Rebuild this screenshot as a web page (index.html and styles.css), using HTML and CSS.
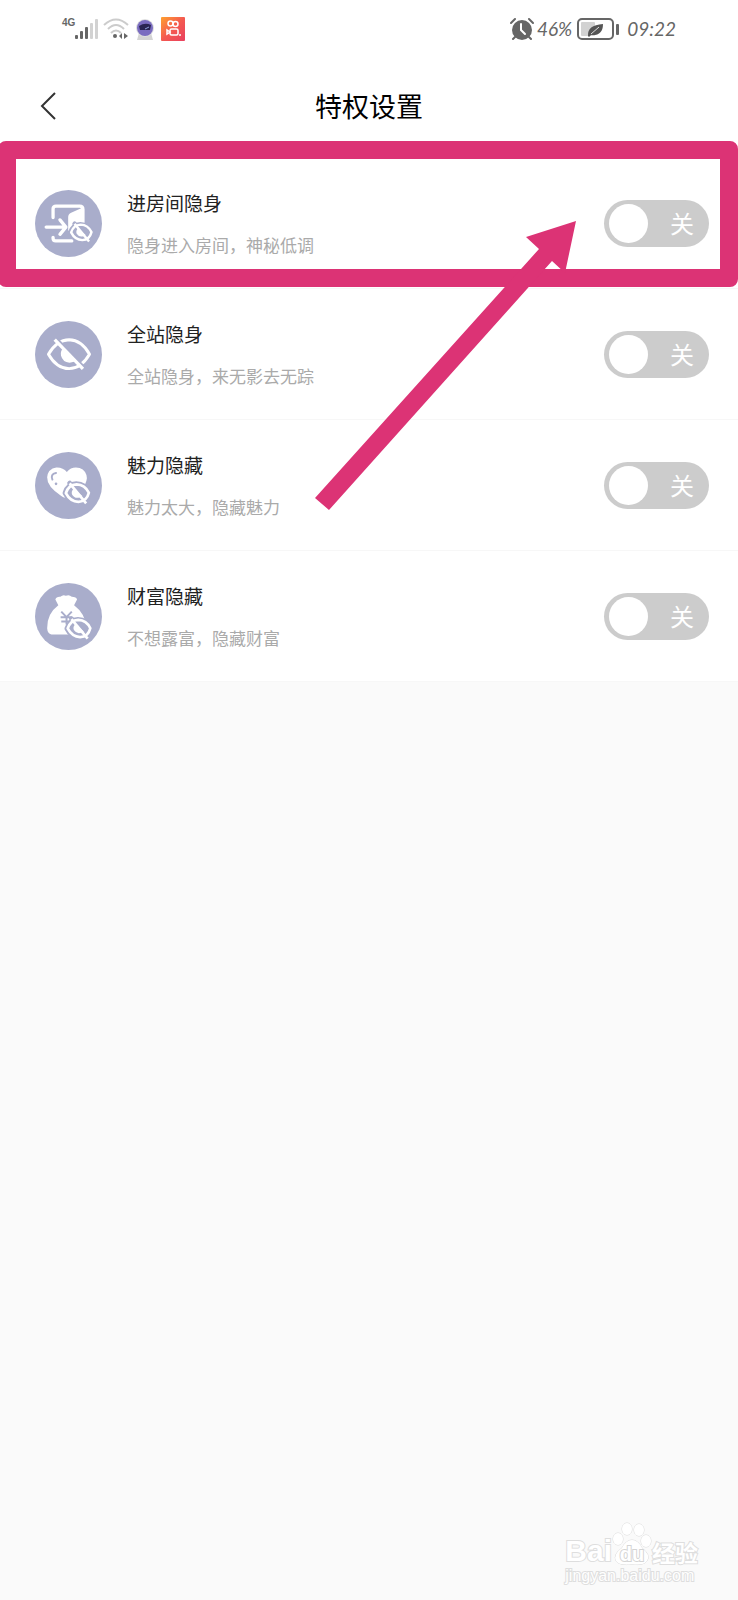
FILE: index.html
```
<!DOCTYPE html>
<html lang="zh-CN">
<head>
  <meta charset="UTF-8" />
  <meta name="viewport" content="width=device-width, initial-scale=1.0" />
  <title>特权设置</title>
  <link rel="stylesheet" href="styles.css">
</head>
<body>
  <svg class="defs" aria-hidden="true">
    <!-- small crossed-out eye, shared by the icons -->
    <symbol id="hidden-eye" viewBox="0 0 100 84" overflow="visible">
      <path d="M6 42 Q16 10 46 9 Q78 10 94 40 Q86 74 54 75 Q22 74 6 42Z" fill="#a9adcb" stroke="#a9adcb" stroke-width="20" stroke-linejoin="round"/>
      <path d="M22 6 L80 80" stroke="#a9adcb" stroke-width="18" stroke-linecap="round"/>
      <path d="M8 42 Q18 11 47 10 Q78 11 92 41 Q84 73 54 74 Q24 73 8 42Z" fill="none" stroke="#fff" stroke-width="10" stroke-linejoin="round"/>
      <path d="M36 26 Q26 36 31 48 Q40 63 58 58 Q64 56 68 53Z" fill="#fff"/>
      <path d="M22 7 L82 80" stroke="#fff" stroke-width="10"/>
    </symbol>
  </svg>

  <div class="status-bar">
    <div class="status-left">
      <span class="network">4G</span>
      <svg class="signal" width="23" height="22" viewBox="0 0 23 22">
        <g fill="#666"><rect x="0" y="17" width="3" height="4" rx="1"/><rect x="5" y="13" width="3" height="8" rx="1"/><rect x="10" y="9" width="3" height="12" rx="1"/></g>
        <g fill="#d2d2d2"><rect x="15" y="5" width="3" height="16" rx="1"/><rect x="20" y="1" width="3" height="20" rx="1"/></g>
      </svg>
      <svg class="wifi" width="26" height="22" viewBox="0 0 26 22">
        <g fill="none" stroke="#ccc" stroke-width="2"><path d="M1 7 Q13 -4 25 7"/><path d="M5 11 Q13 3 21 11"/><path d="M8 15 Q13 10 18 15"/></g>
        <g fill="#666"><circle cx="12" cy="18" r="2"/><path d="M16 18l3-3v6zM25 18l-4-3v6z"/></g>
      </svg>
      <svg class="app" width="18" height="24" viewBox="0 0 18 24">
        <path d="M3 16h12l2 7H1z" fill="#d4d4d4"/>
        <circle cx="9" cy="11" r="9" fill="#dedede"/>
        <circle cx="9" cy="11" r="8" fill="#7a6cc0"/>
        <path d="M3 9 Q9 5 15 8 L14 13 L4 13Z" fill="#292452"/>
        <path d="M9 12l4-2" stroke="#8ea0dd" stroke-width="1"/>
      </svg>
      <svg class="app" width="24" height="24" viewBox="0 0 24 24">
        <defs><linearGradient id="kwai" x1="0" y1="0" x2="1" y2="1"><stop offset="0" stop-color="#ffa12e"/><stop offset=".5" stop-color="#f45a50"/><stop offset="1" stop-color="#e9405f"/></linearGradient></defs>
        <rect width="24" height="24" rx="1" fill="url(#kwai)"/>
        <g fill="none" stroke="#fff" stroke-width="1.500"><circle cx="9.500" cy="6.500" r="2.500"/><circle cx="14.500" cy="7" r="2.500"/><rect x="9" y="12" width="8" height="6" rx="1.500"/><path d="M9 15l-3-2v4z"/></g>
        <circle cx="19" cy="18" r="1" fill="#fff"/>
      </svg>
    </div>
    <div class="status-right">
      <svg class="alarm" width="24" height="24" viewBox="0 0 24 24">
        <circle cx="12" cy="13" r="10" fill="#666"/>
        <path d="M1 6l4-4M19 2l4 4M5 20l-2 2M19 20l2 2" stroke="#666" stroke-width="2" stroke-linecap="round"/>
        <path d="M11 7v6l4 4" fill="none" stroke="#fff" stroke-width="2" stroke-linecap="round"/>
      </svg>
      <span class="percent">46%</span>
      <svg class="battery" width="42" height="22" viewBox="0 0 42 22">
        <rect x="1" y="1" width="35" height="20" rx="4" fill="#fff" stroke="#666" stroke-width="2"/>
        <rect x="4" y="4" width="14" height="14" rx="1" fill="#d2d2d2"/>
        <path d="M11 18 Q10 7 26 6 Q26 18 14 17 L12 19Z" fill="#555"/>
        <path d="M14 16 L22 9" stroke="#ddd" stroke-width="1"/>
        <rect x="39" y="6" width="3" height="11" rx="1" fill="#666"/>
      </svg>
      <span class="time">09:22</span>
    </div>
  </div>

  <header class="header">
    <a class="back" href="#" aria-label="返回">
      <svg width="16" height="28" viewBox="0 0 16 28"><path d="M15 1 L2 14 L15 27" fill="none" stroke="#333" stroke-width="2"/></svg>
    </a>
    <h1>特权设置</h1>
  </header>

  <main class="settings">
    <div class="row">
      <svg class="icon" viewBox="0 0 204 204">
        <circle cx="102" cy="102" r="102" fill="#a9adcb"/>
        <g fill="none" stroke="#fff" stroke-width="10" stroke-linecap="round" stroke-linejoin="round">
          <path d="M55 84 V58 Q55 49 64 49 H136 Q146 49 146 59 V100"/>
          <path d="M55 144 V147 Q55 155 63 155 H112"/>
          <path d="M34 113 H90 M76 91 L94 113 L76 135"/>
        </g>
        <path d="M101 82 Q101 73 110 69 L149 52 V112 H115 L101 125Z" fill="#fff"/>
        <use href="#hidden-eye" x="104" y="98" width="74" height="62"/>
      </svg>
      <div class="text">
        <h2 id="room-title">进房间隐身</h2>
        <p>隐身进入房间，神秘低调</p>
      </div>
      <label class="switch">
        <input type="checkbox" role="switch" aria-labelledby="room-title">
        <span>关</span>
      </label>
      <div class="highlight"></div>
    </div>

    <div class="row">
      <svg class="icon" viewBox="0 0 204 204">
        <circle cx="102" cy="102" r="102" fill="#a9adcb"/>
        <path d="M41 101 Q66 58 104 57 Q142 58 166 101 Q141 144 104 145 Q65 144 41 101Z" fill="none" stroke="#fff" stroke-width="9" stroke-linejoin="round"/>
        <path d="M89 80 Q76 90 79 105 Q84 125 105 127 Q121 126 128 119Z" fill="#fff"/>
        <path d="M65 52 L151 141" stroke="#a9adcb" stroke-width="7"/>
        <path d="M60 57 L146 146" stroke="#fff" stroke-width="10"/>
      </svg>
      <div class="text">
        <h2 id="site-title">全站隐身</h2>
        <p>全站隐身，来无影去无踪</p>
      </div>
      <label class="switch">
        <input type="checkbox" role="switch" aria-labelledby="site-title">
        <span>关</span>
      </label>
    </div>

    <div class="row">
      <svg class="icon" viewBox="0 0 204 204">
        <circle cx="102" cy="102" r="102" fill="#a9adcb"/>
        <path d="M97 61 Q112 43 136 49 Q157 57 158 80 Q156 100 141 113 L106 136 Q90 144 80 134 Q36 105 37 77 Q39 51 65 47 Q85 46 97 61Z" fill="#fff"/>
        <path d="M64 64 Q46 67 53 84" fill="none" stroke="#a9adcb" stroke-width="6" stroke-linecap="round"/>
        <circle cx="64" cy="97" r="4" fill="#a9adcb"/>
        <use href="#hidden-eye" x="87" y="90" width="84" height="70"/>
      </svg>
      <div class="text">
        <h2 id="charm-title">魅力隐藏</h2>
        <p>魅力太大，隐藏魅力</p>
      </div>
      <label class="switch">
        <input type="checkbox" role="switch" aria-labelledby="charm-title">
        <span>关</span>
      </label>
    </div>

    <div class="row">
      <svg class="icon" viewBox="0 0 204 204">
        <circle cx="102" cy="102" r="102" fill="#a9adcb"/>
        <path d="M71 68 L62 50 Q65 41 77 42 Q86 34 94 39 Q104 34 112 42 Q126 42 128 50 L119 68 Q154 94 156 136 Q153 157 134 157 H50 Q38 154 37 138 Q36 94 71 68Z" fill="#fff"/>
        <path d="M80 87 L96 104 L112 87 M96 104 V126 M78 104 H112 M80 117 H111" fill="none" stroke="#a9adcb" stroke-width="6"/>
        <use href="#hidden-eye" x="93" y="104" width="82" height="69"/>
      </svg>
      <div class="text">
        <h2 id="wealth-title">财富隐藏</h2>
        <p>不想露富，隐藏财富</p>
      </div>
      <label class="switch">
        <input type="checkbox" role="switch" aria-labelledby="wealth-title">
        <span>关</span>
      </label>
    </div>

    <svg class="arrow" width="262" height="290" viewBox="0 0 262 290">
      <path d="M261 0 L211 16 L224 28 L0 277 L14 289 L237 40 L250 52Z" fill="#dc3375"/>
    </svg>
  </main>

  <div class="watermark">
    <div class="brand">
      <span class="bai">Bai</span>
      <svg width="40" height="44" viewBox="0 0 40 44">
        <g fill="#fff" stroke="#dcdcdc" stroke-width="1">
          <ellipse cx="6" cy="17" rx="5" ry="6"/><ellipse cx="15" cy="7" rx="5" ry="6"/><ellipse cx="27" cy="8" rx="5" ry="6"/><ellipse cx="34" cy="19" rx="5" ry="6"/>
          <path d="M20 18 Q26 18 30 26 Q39 33 35 39 Q31 44 20 42 Q8 44 4 39 Q1 32 10 26 Q14 18 20 18Z"/>
        </g>
        <text class="du" x="20" y="39" text-anchor="middle">du</text>
      </svg>
      <span class="jingyan">经验</span>
    </div>
    <div class="site">jingyan.baidu.com</div>
  </div>
</body>
</html>
```

FILE: styles.css
```
* {
  box-sizing: border-box;
}

body {
  margin: 0;
  min-height: 100vh;
  position: relative;
  overflow-x: hidden;
  background-color: #fafafa;
  font-family: "Noto Sans CJK SC", sans-serif;
}

h1, h2, p {
  margin: 0;
  font-weight: 400;
}

svg {
  display: block;
  flex-shrink: 0;
}

.defs {
  position: absolute;
  width: 0;
  height: 0;
}

/* status bar */
.status-bar {
  display: flex;
  justify-content: space-between;
  height: 58px;
  padding: 0 62px;
  background-color: #fff;
  color: #666;
  font-family: Lato, sans-serif;
}

.status-left,
.status-right {
  display: flex;
  align-items: center;
}

.network {
  align-self: flex-start;
  margin-top: 17px;
  font: 700 10px/12px "Liberation Sans", sans-serif;
}

.wifi {
  margin-left: 5px;
}

.app {
  margin-left: 7px;
}

.percent,
.time {
  font-size: 19px;
  font-style: italic;
  line-height: 24px;
}

.percent {
  margin: 0 5px 0 3px;
}

.time {
  margin-left: 8px;
}

/* header */
.header {
  position: relative;
  display: flex;
  align-items: center;
  justify-content: center;
  height: 100px;
  padding-bottom: 4px;
  background-color: #fff;
}

.header h1 {
  font-size: 27px;
  line-height: 40px;
  color: #000;
}

.back {
  position: absolute;
  left: 40px;
}

/* list */
.settings {
  position: relative;
  background-color: #fff;
}

.row {
  position: relative;
  display: flex;
  align-items: center;
  height: 131px;
  padding: 0 29px 0 35px;
  border-bottom: 1px solid #f7f7f7;
}

.icon {
  width: 67px;
  height: 67px;
}

.text {
  flex: 1;
  margin-left: 25px;
  padding-top: 2px;
}

.text h2 {
  font-size: 19px;
  line-height: 24px;
  color: #222;
}

.text p {
  margin-top: 18px;
  font-size: 17px;
  line-height: 24px;
  color: #aaa;
}

/* switch */
.switch {
  display: grid;
  align-items: center;
  width: 105px;
  height: 47px;
  color: #fff;
}

.switch input,
.switch span {
  grid-area: 1 / 1;
}

.switch input {
  appearance: none;
  display: flex;
  width: 100%;
  height: 100%;
  margin: 0;
  padding: 4px 5px;
  border-radius: 24px;
  background-color: #ccc;
}

.switch input::before {
  content: "";
  width: 39px;
  height: 39px;
  border-radius: 50%;
  background-color: #fff;
}

.switch span {
  justify-self: end;
  margin-right: 15px;
  font-size: 24px;
  line-height: 24px;
  pointer-events: none;
}

/* markings over the list */
.highlight {
  position: absolute;
  top: -17px;
  right: 0;
  bottom: 1px;
  left: -2px;
  border: 18px solid #dc3375;
  border-radius: 8px;
  pointer-events: none;
}

.arrow {
  position: absolute;
  top: 63px;
  right: 161px;
  pointer-events: none;
}

/* watermark */
.watermark {
  position: absolute;
  right: 40px;
  bottom: 14px;
  color: #fff;
  -webkit-text-stroke: 2px #dedede;
  paint-order: stroke fill;
}

.brand {
  display: flex;
  align-items: flex-end;
}

.bai {
  font: 700 30px/30px "Liberation Sans", sans-serif;
}

.jingyan {
  font-size: 23px;
  font-weight: 700;
  line-height: 28px;
}

.du {
  font: 700 20px "Liberation Sans", sans-serif;
  fill: #fff;
  stroke: #d4d4d4;
  stroke-width: 2px;
}

.site {
  font: 16px/20px "Liberation Sans", sans-serif;
}
```
